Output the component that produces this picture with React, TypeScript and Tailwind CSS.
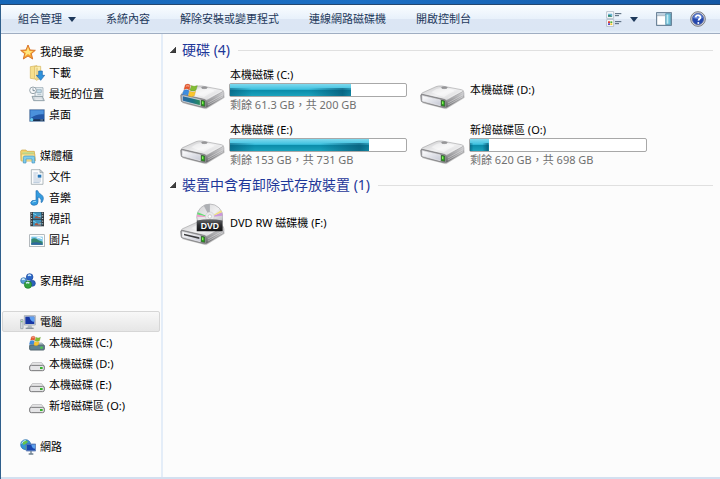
import React from 'react';

interface Drive {
  name: string;
  detail?: string;
  used?: number;
  system?: boolean;
}

const WindowsFlag: React.FC<{ className?: string }> = ({ className }) => (
  <svg viewBox="0 0 48 44" className={className} aria-hidden="true">
    <path d="M10 5 Q18 0 25 6 L22 20 Q14 14 6 19 Z" fill="#e8562a" stroke="#b9421f" />
    <path d="M28 7 Q36 12 46 7 L42 21 Q33 26 24 21 Z" fill="#84bd35" stroke="#5c9227" />
    <path d="M5 22 Q13 17 21 23 L18 37 Q10 31 1 36 Z" fill="#3e8de0" stroke="#2768b8" />
    <path d="M23 24 Q32 29 41 24 L37 38 Q28 43 19 38 Z" fill="#fbc62d" stroke="#cf9418" />
    <path d="M12 7 Q18 3 23 7 L22 12 Q16 8 11 12 Z" fill="#fff" opacity=".35" />
  </svg>
);

const DriveIcon: React.FC<{ system?: boolean; slot?: boolean }> = ({ system, slot }) => (
  <svg viewBox="0 0 135 75" className="w-[45px] h-[25px]" aria-hidden="true">
    <defs>
      <linearGradient id="driveTop" x1="0" y1="0" x2="1" y2="1">
        <stop offset="0" stopColor="#c6c6c8" />
        <stop offset=".5" stopColor="#f1f1f2" />
        <stop offset="1" stopColor="#cfcfd1" />
      </linearGradient>
      <linearGradient id="driveSide" x1="0" y1="0" x2="0" y2="1">
        <stop offset="0" stopColor="#dcdcde" />
        <stop offset="1" stopColor="#68686b" />
      </linearGradient>
      <linearGradient id="driveFront" x1="0" y1="0" x2="1" y2="1">
        <stop offset="0" stopColor="#fff" />
        <stop offset="1" stopColor="#c5c8d4" />
      </linearGradient>
      <linearGradient id="driveFrontSystem" x1="0" y1="0" x2="1" y2="0">
        <stop offset="0" stopColor="#2d68a8" />
        <stop offset=".6" stopColor="#1d7485" />
        <stop offset="1" stopColor="#2d8d5a" />
      </linearGradient>
    </defs>
    <path d="M5 54 L78 73 L134 38 L131 30 L70 60 Z" fill="#000" opacity=".2" />
    <path d="M79 44 L130 18 Q133 20 132 36 L82 67 Q78 69 76 67 Z" fill="url(#driveSide)" stroke="#8a8a8c" />
    <path d="M4 29 Q3 26 8 23 L48 5 Q55 2 66 3 L124 14 Q133 16 128 20 L84 44 Q79 47 73 45 Z" fill="url(#driveTop)" stroke="#8e8e90" strokeWidth="1.5" />
    <path d="M34 22 Q48 9 70 9 Q98 12 104 18 Q84 27 72 36 Q52 30 34 22Z" fill="#fff" opacity=".45" />
    <ellipse cx="73" cy="8" rx="9" ry="3" fill="#99999b" stroke="#707073" />
    <path d="M85 39 L127 17 M84 54 L130 29 M84 60 L129 35" stroke="#fff" strokeWidth="2" opacity=".55" />
    <path d="M2 31 Q3 27 8 28 L73 43 Q79 45 79 50 L78 65 Q77 70 71 68 L8 52 Q3 50 3 45 Z" fill="#98989b" stroke="#68686b" strokeWidth="1.5" />
    <path d="M7 32 L61 45 V62 L7 48 Z" fill={system ? 'url(#driveFrontSystem)' : 'url(#driveFront)'} stroke="#ececee" strokeWidth="2" />
    {slot && <path d="M12 38 L58 49 V54 L12 43 Z" fill="#3c3c3e" />}
    <path d="M64 46 L74 48 V64 L64 62 Z" fill="#24a51b" stroke="#33522d" strokeWidth="2" />
    <path d="M66 49 L70 50 V58 L66 57 Z" fill="#8bf15c" />
  </svg>
);

const DvdIcon = () => (
  <span className="relative block w-[45px] h-[45px]">
    <span className="absolute bottom-0.5 left-0">
      <DriveIcon slot />
    </span>
    <svg viewBox="0 0 78 84" className="absolute top-0 left-4 w-[27px] h-[29px]" aria-hidden="true">
      <defs>
        <linearGradient id="disc" x1="0" y1="0" x2="1" y2="1">
          <stop offset="0" stopColor="#d0d0d2" />
          <stop offset=".5" stopColor="#f0f0f1" />
          <stop offset="1" stopColor="#a4a4a8" />
        </linearGradient>
        <linearGradient id="badge" x1="0" y1="0" x2="0" y2="1">
          <stop offset="0" stopColor="#66686b" />
          <stop offset=".5" stopColor="#2b2d30" />
          <stop offset="1" stopColor="#111214" />
        </linearGradient>
      </defs>
      <circle cx="40" cy="41" r="38" fill="url(#disc)" stroke="#a7a7aa" strokeWidth="2" />
      <path d="M40 41 L22 7 A38 38 0 0 1 40 3 Z" fill="#aeb0b4" />
      <path d="M40 41 L3 33 L5 27 Z" fill="#62de74" />
      <path d="M40 41 L3 40 L3 33 Z" fill="#ef9acb" />
      <path d="M40 41 L77 37 L75 27 Z" fill="#cb98da" />
      <path d="M40 41 L75 27 L73 21 Z" fill="#f2e07c" />
      <circle cx="40" cy="39" r="13" fill="#e9e9eb" stroke="#b5b5b8" />
      <circle cx="40" cy="39" r="5" fill="#fff" stroke="#8e8e90" />
      <path d="M2 51 Q40 43 77 51 V82 H2 Z" fill="url(#badge)" />
      <text x="40" y="76" textAnchor="middle" fontFamily="Liberation Sans, sans-serif" fontWeight="700" fontSize="25" fill="#fff">DVD</text>
    </svg>
  </span>
);

const StarIcon = () => (
  <svg viewBox="0 0 48 48" className="size-4" aria-hidden="true">
    <path d="M24 3 L30 18 L46 19 L34 29 L38 45 L24 36 L10 45 L14 29 L2 19 L18 18 Z" fill="#f7a52e" stroke="#d9752c" strokeWidth="3" strokeLinejoin="round" />
    <path d="M24 9 L28 21 L39 22 L30 28 L31 34 L24 30 L14 37 L18 27 L9 22 L20 21 Z" fill="#ffe680" />
  </svg>
);

const DownloadIcon = () => (
  <svg viewBox="0 0 48 48" className="size-4" aria-hidden="true">
    <path d="M4 5 L24 2 V43 L4 40 Z" fill="#f6df8c" stroke="#d3b255" strokeWidth="2" />
    <path d="M17 4 H35 V40 L22 46 L17 38 Z" fill="#fbeeb2" stroke="#d3b255" strokeWidth="2" />
    <path d="M24 8 V43" stroke="#c9a64a" strokeWidth="2" />
    <path d="M29 18 H40 V31 H47 L35 46 L22 31 H29 Z" fill="#2f93dd" stroke="#1b63ab" strokeWidth="2" />
  </svg>
);

const RecentIcon = () => (
  <svg viewBox="0 0 48 48" className="size-4" aria-hidden="true">
    <path d="M18 5 H42 V32 H18 Z" fill="#edf3f6" stroke="#889ba6" strokeWidth="2" />
    <path d="M23 11 H37 V20 H23 Z M25 25 H37" fill="#c4dce9" stroke="#8aa3b0" strokeWidth="2" />
    <path d="M9 31 H40 L46 44 H14 Z" fill="#c9d3d9" stroke="#75868f" strokeWidth="2" />
    <path d="M17 36 H38 M19 40 H40" stroke="#fff" strokeWidth="2" />
    <circle cx="12" cy="13" r="10" fill="#f7f9fa" stroke="#97a3aa" strokeWidth="3" />
    <path d="M12 7 V14 H18" fill="none" stroke="#4e6575" strokeWidth="2" />
  </svg>
);

const DesktopIcon = () => (
  <svg viewBox="0 0 48 48" className="size-4" aria-hidden="true">
    <rect x="2" y="8" width="44" height="35" fill="#2458a8" stroke="#7690ae" strokeWidth="2" />
    <path d="M4 10 H44 V22 Q22 20 4 34 Z" fill="#4b91dc" />
    <path d="M3 37 H45 V42 H3 Z" fill="#18304f" />
    <circle cx="8" cy="38" r="5" fill="#69cdf0" />
    <path d="M34 39 H42" stroke="#a8c6e2" strokeWidth="2" />
  </svg>
);

const LibraryIcon = () => (
  <svg viewBox="0 0 48 48" className="size-4" aria-hidden="true">
    <path d="M2 10 L5 6 H18 L21 10 H43 L46 38 H3 Z" fill="#f2d16e" stroke="#c9a542" strokeWidth="2" />
    <path d="M8 13 H41 V20 H8 Z" fill="#b8e19b" />
    <path d="M4 18 H44 V39 H4 Z" fill="#fbe99b" stroke="#d3b255" strokeWidth="2" />
    <path d="M10 45 V28 Q10 24 15 24 H39 Q44 24 44 28 V45 H36 V33 H18 V45 Z" fill="#80cdec" stroke="#3f93bf" strokeWidth="2" />
  </svg>
);

const DocumentIcon = () => (
  <svg viewBox="0 0 48 48" className="size-4" aria-hidden="true">
    <path d="M7 2 H33 L42 11 V46 H7 Z" fill="#fbfcfd" stroke="#8d989f" strokeWidth="2" />
    <path d="M33 2 V11 H42 Z" fill="#d5dbe0" stroke="#8d989f" strokeWidth="2" />
    <path d="M13 12 H27 M13 18 H23 M13 24 H23 M13 30 H36 M13 36 H36 M13 41 H32" stroke="#91aac7" strokeWidth="2" />
    <rect x="26" y="17" width="11" height="9" fill="#2475b8" />
  </svg>
);

const MusicIcon = () => (
  <svg viewBox="0 0 48 48" className="size-4" aria-hidden="true">
    <path d="M21 2 H26 Q28 10 37 14 Q48 22 39 37 H36 Q39 25 27 21 V36 Q27 46 15 46 Q5 45 5 38 Q7 29 21 31 Z" fill="#349cdf" stroke="#1f6cb2" strokeWidth="2" />
    <path d="M11 37 Q14 33 21 34" fill="none" stroke="#9dddfb" strokeWidth="3" />
  </svg>
);

const VideoIcon = () => (
  <svg viewBox="0 0 48 48" className="size-4" aria-hidden="true">
    <rect x="4" y="3" width="41" height="43" fill="#31383d" />
    <path d="M12 4 H37 V23 H12 Z M12 26 H37 V45 H12 Z" fill="#3e94bf" />
    <path d="M16 21 L22 14 L27 18 L34 11 V22 Z M16 43 L21 35 L29 39 L35 32 V44 Z" fill="#a9563f" />
    <path d="M12 7 L22 12 M28 17 L37 15 M12 30 L22 35 M28 39 L37 38" stroke="#79d2ef" strokeWidth="3" fill="none" />
    <path d="M8 5 V46 M41 5 V46" stroke="#dfe4e7" strokeWidth="3" strokeDasharray="3 5" />
  </svg>
);

const PictureIcon = () => (
  <svg viewBox="0 0 48 48" className="size-4" aria-hidden="true">
    <rect x="2" y="8" width="44" height="36" fill="#fdfdfd" stroke="#8f999f" strokeWidth="2" />
    <rect x="7" y="14" width="34" height="24" fill="#74c4e9" />
    <path d="M7 22 Q18 15 29 25 L41 29 V38 H7 Z" fill="#35866e" />
    <path d="M7 33 Q24 27 41 35 V38 H7 Z" fill="#2f66a0" />
    <path d="M23 18 Q31 15 39 20" stroke="#fff" strokeWidth="4" fill="none" />
  </svg>
);

const HomegroupIcon = () => (
  <svg viewBox="0 0 48 48" className="size-4" aria-hidden="true">
    <path d="M14 22 L29 11 L37 33 Z" fill="none" stroke="#8bafd0" strokeWidth="5" />
    <circle cx="29" cy="12" r="10" fill="#2a66c7" stroke="#1b469b" strokeWidth="2" />
    <circle cx="11" cy="23" r="9" fill="#559ad3" stroke="#2d68aa" strokeWidth="2" />
    <circle cx="37" cy="31" r="9" fill="#2d62b8" stroke="#1b469b" strokeWidth="2" />
    <circle cx="24" cy="35" r="11" fill="#34a43e" stroke="#1d7428" strokeWidth="2" />
    <path d="M24 8 Q28 4 33 8 M6 20 Q10 16 14 20 M18 31 Q23 26 28 31" fill="none" stroke="#d8f2ff" strokeWidth="4" />
  </svg>
);

const ComputerIcon = () => (
  <svg viewBox="0 0 48 48" className="size-4" aria-hidden="true">
    <path d="M2 17 H9 V44 H2 Z" fill="#d9dfe3" stroke="#87939b" strokeWidth="2" />
    <path d="M4 23 H7" stroke="#3bac3a" strokeWidth="3" />
    <path d="M13 5 H46 V33 H13 Z" fill="#d6dce1" stroke="#8c969f" strokeWidth="2" />
    <path d="M16 8 H43 V30 H16 Z" fill="#1636a4" />
    <path d="M28 8 H43 V23 Q32 24 28 8 Z" fill="#5e9ff0" />
    <path d="M25 34 H34 L37 42 H21 Z" fill="#b2bbc2" />
    <path d="M17 43 H41" stroke="#8c969f" strokeWidth="4" />
  </svg>
);

const SmallDriveIcon = () => (
  <svg viewBox="0 0 48 48" className="size-4" aria-hidden="true">
    <path d="M10 20 H38 L46 31 H2 Z" fill="#ececed" stroke="#a5a5a7" strokeWidth="2" />
    <rect x="2" y="28" width="44" height="16" rx="5" fill="#e5e5e7" stroke="#77777a" strokeWidth="3" />
    <rect x="33" y="33" width="8" height="6" fill="#35b52c" />
  </svg>
);

const SystemDriveIcon = () => (
  <span className="relative block size-4">
    <svg viewBox="0 0 48 48" className="size-4" aria-hidden="true">
      <path d="M10 24 H39 L46 32 H2 Z" fill="#b9ccd6" stroke="#8799a4" strokeWidth="2" />
      <rect x="2" y="30" width="44" height="15" rx="3" fill="#5f8190" stroke="#52656f" strokeWidth="3" />
      <rect x="34" y="35" width="7" height="6" fill="#49d243" />
    </svg>
    <WindowsFlag className="absolute top-0 left-0 w-3 h-3" />
  </span>
);

const NetworkIcon = () => (
  <svg viewBox="0 0 48 48" className="size-4" aria-hidden="true">
    <circle cx="17" cy="17" r="15" fill="#3693d6" stroke="#246aa7" strokeWidth="2" />
    <path d="M7 9 Q17 0 24 8 L18 15 L9 18 Z M17 21 L27 17 L24 29 L17 31 Z" fill="#68c348" />
    <path d="M5 14 Q8 5 17 4" stroke="#c5ecff" strokeWidth="3" fill="none" />
    <path d="M19 15 H47 V36 H19 Z" fill="#7f9fd0" stroke="#3f62a5" strokeWidth="2" />
    <path d="M21 17 H45 V34 H21 Z" fill="#1846ae" />
    <path d="M34 17 H45 V29 Q36 29 34 17 Z" fill="#5da1ee" />
    <path d="M33 36 V43 M26 45 H40" stroke="#6e8090" strokeWidth="4" />
  </svg>
);

const Caret = () => (
  <svg viewBox="0 0 8 5" className="w-2 h-[5px]" aria-hidden="true">
    <path d="M0 0 H8 L4 5 Z" fill="#1e395b" />
  </svg>
);

const ViewIcon = () => (
  <svg viewBox="0 0 48 48" className="size-4" aria-hidden="true">
    <path d="M2 2 H23 V22 H2 Z M2 26 H23 V46 H2 Z" fill="#fff" stroke="#9aa8b5" strokeWidth="2" />
    <path d="M6 8 H19 V17 H6 Z" fill="#70b5d8" />
    <path d="M6 13 Q12 9 19 17 H6 Z" fill="#2b8263" />
    <path d="M6 31 H12 V36 H6 Z" fill="#e33b31" />
    <path d="M13 31 H19 V36 H13 Z" fill="#4fae37" />
    <path d="M6 37 H12 V42 H6 Z" fill="#5849bf" />
    <path d="M13 37 H19 V42 H13 Z" fill="#f2c52c" />
    <path d="M27 8 H46 M27 14 H39 M27 32 H46 M27 38 H39" stroke="#4c6075" strokeWidth="3" />
  </svg>
);

const PaneIcon = () => (
  <svg viewBox="0 0 48 42" className="w-4 h-[14px]" aria-hidden="true">
    <rect x="2" y="2" width="44" height="38" fill="#fff" stroke="#567188" strokeWidth="3" />
    <path d="M3 3 H45 V9 H3 Z" fill="#bed0df" />
    <path d="M29 5 H44 V38 H29 Z" fill="#6fc0d8" stroke="#4588a4" strokeWidth="2" />
    <path d="M32 8 H37 V35 H32 Z" fill="#c4e9f2" />
    <path d="M3 11 H27" stroke="#7b92a5" strokeWidth="2" />
  </svg>
);

const HelpIcon = () => (
  <svg viewBox="0 0 48 48" className="size-4" aria-hidden="true">
    <circle cx="24" cy="24" r="22" fill="#d2d3d8" stroke="#7b7c82" strokeWidth="3" />
    <circle cx="24" cy="24" r="17" fill="#2447ad" stroke="#51649e" strokeWidth="2" />
    <path d="M9 21 Q12 8 24 8 Q36 8 39 21 Q24 27 9 21 Z" fill="#5d80d4" />
    <path d="M17 19 Q18 12 25 13 Q33 14 31 21 Q26 25 25 29" fill="none" stroke="#fff" strokeWidth="5" />
    <circle cx="25" cy="36" r="3" fill="#fff" />
  </svg>
);

const navGroups = [
  {
    title: '我的最愛',
    icon: StarIcon,
    items: [
      { label: '下載', icon: DownloadIcon },
      { label: '最近的位置', icon: RecentIcon },
      { label: '桌面', icon: DesktopIcon }
    ]
  },
  {
    title: '媒體櫃',
    icon: LibraryIcon,
    items: [
      { label: '文件', icon: DocumentIcon },
      { label: '音樂', icon: MusicIcon },
      { label: '視訊', icon: VideoIcon },
      { label: '圖片', icon: PictureIcon }
    ]
  },
  { title: '家用群組', icon: HomegroupIcon, items: [] },
  {
    title: '電腦',
    icon: ComputerIcon,
    selected: true,
    items: [
      { label: '本機磁碟 (C:)', icon: SystemDriveIcon },
      { label: '本機磁碟 (D:)', icon: SmallDriveIcon },
      { label: '本機磁碟 (E:)', icon: SmallDriveIcon },
      { label: '新增磁碟區 (O:)', icon: SmallDriveIcon }
    ]
  },
  { title: '網路', icon: NetworkIcon, items: [] }
];

const drives: Drive[] = [
  { name: '本機磁碟 (C:)', detail: '剩餘 61.3 GB，共 200 GB', used: 69, system: true },
  { name: '本機磁碟 (D:)' },
  { name: '本機磁碟 (E:)', detail: '剩餘 153 GB，共 731 GB', used: 79 },
  { name: '新增磁碟區 (O:)', detail: '剩餘 620 GB，共 698 GB', used: 11 }
];

const commands = ['系統內容', '解除安裝或變更程式', '連線網路磁碟機', '開啟控制台'];

const Toolbar = () => (
  <header className="flex items-center justify-between h-[29px] pl-[17px] pr-3.5 text-[#1e395b] border-b border-[#a0aec2] bg-[linear-gradient(to_bottom,#fafdff_0%,#e8f1fb_49%,#dce6f4_50%,#dbe6f4_90%,#e9f2fb_100%)]">
    <div className="flex items-center gap-[30px] whitespace-nowrap">
      <button type="button" className="flex items-center gap-1.5">
        組合管理
        <Caret />
      </button>
      {commands.map((command) => (
        <button type="button" key={command}>{command}</button>
      ))}
    </div>
    <div className="flex items-center gap-[18px]">
      <button type="button" aria-label="變更檢視" className="flex items-center gap-2">
        <ViewIcon />
        <Caret />
      </button>
      <button type="button" aria-label="預覽窗格"><PaneIcon /></button>
      <button type="button" aria-label="說明"><HelpIcon /></button>
    </div>
  </header>
);

const Sidebar = () => (
  <nav className="w-[162px] shrink-0 flex flex-col gap-5 pt-[7px] pb-5 px-px border-r-2 border-[#e4edf8]">
    {navGroups.map((group) => {
      const GroupIcon = group.icon;
      return (
        <div key={group.title}>
          <a
            href="#"
            className={
              group.selected
                ? 'flex items-center gap-1 h-[21px] pl-[17px] rounded-xs border border-[#d6d6d6] bg-gradient-to-b from-[#f8f8f8] to-[#e6e6e6]'
                : 'flex items-center gap-1 h-[21px] pl-[18px]'
            }
          >
            <GroupIcon />
            {group.title}
          </a>
          {group.items.map((item) => {
            const ItemIcon = item.icon;
            return (
              <a href="#" key={item.label} className="flex items-center gap-1 h-[21px] pl-[27px]">
                <ItemIcon />
                {item.label}
              </a>
            );
          })}
        </div>
      );
    })}
  </nav>
);

const SectionHeader: React.FC<{ title: string }> = ({ title }) => (
  <div className="flex items-center gap-2 h-5">
    <button type="button" className="flex items-center gap-1.5 text-[14px] leading-5 text-[#1e3799] whitespace-nowrap">
      <svg viewBox="0 0 6 6" className="size-1.5" aria-hidden="true">
        <path d="M6 0 V6 H0 Z" fill="#404040" stroke="#222" strokeWidth=".5" />
      </svg>
      <h2>{title}</h2>
    </button>
    <div className="flex-1 h-px bg-[#e0e0e0]" />
  </div>
);

const UsageBar: React.FC<{ used: number; label: string }> = ({ used, label }) => (
  <div
    role="meter"
    aria-label={label}
    aria-valuenow={used}
    aria-valuemin={0}
    aria-valuemax={100}
    className="h-3.5 rounded-xs border border-[#a8a8a8] bg-white"
  >
    <div
      className="relative h-full bg-[linear-gradient(to_bottom,#7fd9ee_0%,#3dc1df_45%,#0a8ba9_50%,#1ba3bd_100%)]"
      style={{ width: `${used}%` }}
    >
      <div className="absolute inset-x-0 bottom-0 h-3/5 bg-[linear-gradient(to_right,#04506e88_0%,transparent_18%,transparent_65%,#04506eaa_93%,#04506e55_100%)]" />
    </div>
  </div>
);

const DriveTile: React.FC<{ drive: Drive }> = ({ drive }) => (
  <div className="flex items-center h-[55px] pr-[13px]">
    <div className="relative w-[49px] shrink-0 pt-4">
      <DriveIcon system={drive.system} />
      {drive.system && <WindowsFlag className="absolute top-3.5 left-0.5 w-4 h-[15px]" />}
    </div>
    <div className="flex-1 min-w-0">
      <div className="pl-px leading-4">{drive.name}</div>
      {drive.used !== undefined && <UsageBar used={drive.used} label={drive.name} />}
      {drive.detail && <div className="pl-px leading-4 text-[#707070] whitespace-nowrap">{drive.detail}</div>}
    </div>
  </div>
);

const App: React.FC = () => {
  return (
    <div className="min-h-screen flex flex-col bg-[#fcfcfc] text-black text-[11px] leading-4 font-['Noto_Sans','Noto_Sans_CJK_TC',sans-serif]">
      <div className="h-1 bg-gradient-to-r from-[#1667b8] via-[#1c6fc4] to-[#1458a5]" />
      <div className="h-px bg-[#24476f]" />
      <div className="flex-1 flex flex-col border-l border-[#2f5f8c]">
        <Toolbar />
        <div className="flex-1 flex">
          <Sidebar />
          <main className="flex-1 min-w-0 pt-1.5 pl-[7px] pr-[7px]">
            <section>
              <SectionHeader title="硬碟 (4)" />
              <div className="grid grid-cols-[repeat(auto-fill,240px)] pt-0.5 pb-[3px] pl-2.5">
                {drives.map((drive) => (
                  <DriveTile key={drive.name} drive={drive} />
                ))}
              </div>
            </section>
            <section>
              <SectionHeader title="裝置中含有卸除式存放裝置 (1)" />
              <div className="flex items-center gap-[5px] pt-2 pl-2.5">
                <DvdIcon />
                <div className="pb-1.5">DVD RW 磁碟機 (F:)</div>
              </div>
            </section>
          </main>
        </div>
        <div className="h-0.5 bg-[#d3e0f0]" />
      </div>
    </div>
  );
};

export default App;
